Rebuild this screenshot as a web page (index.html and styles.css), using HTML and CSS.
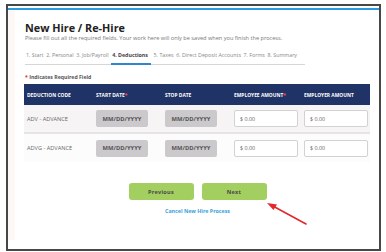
FILE: index.html
```html
<!DOCTYPE html>
<html>
<head>
<meta charset="utf-8">
<link rel="stylesheet" href="styles.css">
</head>
<body>
<div class="frame">
  <div class="topline"></div>
  <div class="panel">
    <div class="strip"></div>
    <div class="content">
      <h1 class="title">New Hire / Re-Hire</h1>
      <p class="subtitle">Please fill out all the required fields. Your work here will only be saved when you finish the process.</p>
      <div class="tabs">
        <span class="tab">1. Start</span>
        <span class="tab">2. Personal</span>
        <span class="tab">3. Job/Payroll</span>
        <span class="tab active">4. Deductions</span>
        <span class="tab">5. Taxes</span>
        <span class="tab">6. Direct Deposit Accounts</span>
        <span class="tab">7. Forms</span>
        <span class="tab">8. Summary</span>
      </div>
      <p class="required"><span class="star">*</span> Indicates Required Field</p>
      <div class="table">
        <div class="row head">
          <div class="cell">DEDUCTION CODE</div>
          <div class="cell">START DATE<span class="star">*</span></div>
          <div class="cell">STOP DATE</div>
          <div class="cell">EMPLOYEE AMOUNT<span class="star">*</span></div>
          <div class="cell">EMPLOYER AMOUNT</div>
        </div>
        <div class="row odd">
          <div class="cell code">ADV - ADVANCE</div>
          <div class="cell"><div class="date">MM/DD/YYYY</div></div>
          <div class="cell"><div class="date">MM/DD/YYYY</div></div>
          <div class="cell"><div class="amount">$ 0.00</div></div>
          <div class="cell"><div class="amount">$ 0.00</div></div>
        </div>
        <div class="row even">
          <div class="cell code">ADVG - ADVANCE</div>
          <div class="cell"><div class="date">MM/DD/YYYY</div></div>
          <div class="cell"><div class="date">MM/DD/YYYY</div></div>
          <div class="cell"><div class="amount">$ 0.00</div></div>
          <div class="cell"><div class="amount">$ 0.00</div></div>
        </div>
      </div>
      <div class="actions">
        <div class="btn">Previous</div>
        <div class="btn">Next</div>
      </div>
      <div class="cancel">Cancel New Hire Process</div>
    </div>
  </div>
  <svg class="arrow" width="60" height="40" viewBox="0 0 60 40">
    <line x1="44" y1="29" x2="9" y2="10" stroke="#e3282b" stroke-width="1.6" stroke-linecap="round"/>
    <polygon points="5,8 15,9.5 11.5,15" fill="#e3282b"/>
  </svg>
</div>
</body>
</html>
```
FILE: styles.css
```css
* { box-sizing: border-box; }
html, body { margin: 0; padding: 0; background: #fff; }
body {
  font-family: "Open Sans", "Liberation Sans", sans-serif;
  color: #333;
}
.frame {
  position: relative;
  margin: 4px 5px 0 6px;
  height: 247px;
  border: 2px solid #474747;
  background: #fff;
}
.topline {
  height: 2px;
  margin-top: 2px;
  background: #2b9be0;
}
.panel {
  display: flex;
  height: 230px;
}
.strip {
  width: 7px;
  background: #fdf7f6;
}
.content {
  flex: 1;
  padding: 0 9px 0 10px;
}
.title {
  margin: 11px 0 0;
  font-size: 10.8px;
  font-weight: 700;
  line-height: 13px;
  color: #222;
}
.subtitle {
  margin: 0;
  font-size: 5.6px;
  line-height: 8px;
  color: #777;
}
.tabs {
  display: flex;
  gap: 2.6px;
  margin-top: 7px;
  width: 280px;
  border-bottom: 1px solid #d6d6d6;
  font-size: 5.3px;
  color: #888;
}
.tab {
  padding: 2px 0 4px;
  white-space: nowrap;
}
.tab:first-child { padding-left: 1px; }
.tab.active {
  color: #444;
  font-weight: 700;
  border-bottom: 2px solid #2f86c8;
  margin-bottom: -1px;
  padding-left: 1px;
  padding-right: 3px;
}
.required {
  margin: 9px 0 0;
  font-size: 5.2px;
  font-weight: 700;
  color: #555;
  line-height: 7px;
}
.star { color: #e0262a; }
.table {
  margin-top: 3px;
  margin-left: -1px;
  width: 346px;
}
.row {
  display: grid;
  grid-template-columns: 69px 69px 69px 70px 69px;
  align-items: center;
}
.head {
  height: 21px;
  background: #1f3366;
  color: #fff;
  font-size: 4.9px;
  font-weight: 700;
}
.head .star { color: #ff4f60; }
.cell {
  padding-left: 3px;
  white-space: nowrap;
}
.odd {
  height: 29px;
  background: #f6f4f4;
  border-bottom: 2px solid #e6e4e4;
}
.even {
  height: 28px;
  background: #fdfcfc;
}
.code {
  font-size: 5.6px;
  color: #666;
}
.date {
  width: 52px;
  height: 17px;
  background: #cbc9cc;
  border-radius: 2px;
  font-size: 5.8px;
  font-weight: 700;
  color: #555;
  display: flex;
  align-items: center;
  justify-content: center;
}
.amount {
  width: 64px;
  height: 17px;
  background: #fff;
  border: 1px solid #d2d2d2;
  border-radius: 2px;
  font-size: 5.4px;
  color: #666;
  display: flex;
  align-items: center;
  padding-left: 5px;
}
.actions {
  display: flex;
  justify-content: center;
  gap: 8px;
  margin-top: 21px;
}
.btn {
  width: 65px;
  height: 17px;
  background: #a3cf60;
  border-radius: 3px;
  display: flex;
  align-items: center;
  justify-content: center;
  font-size: 5.6px;
  font-weight: 700;
  color: #4a4a4a;
  letter-spacing: 0.2px;
}
.cancel {
  margin-top: 7px;
  text-align: center;
  font-size: 5.3px;
  font-weight: 700;
  color: #3b9fd9;
}
.arrow {
  position: absolute;
  left: 254px;
  top: 189px;
}
```
